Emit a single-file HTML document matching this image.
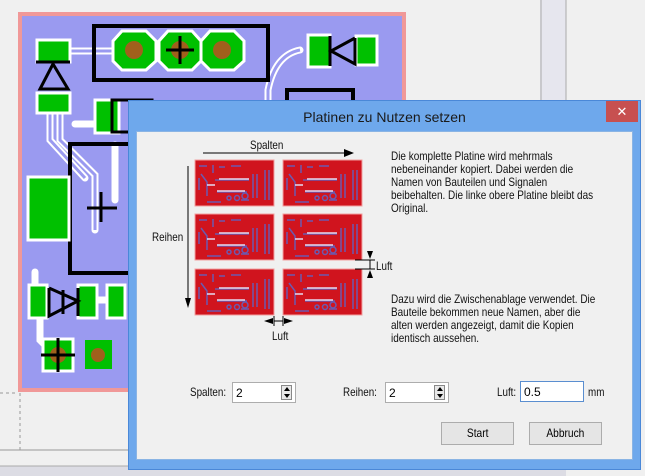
<!DOCTYPE html>
<html><head><meta charset="utf-8"><style>
html,body{margin:0;padding:0;}
body{width:645px;height:476px;overflow:hidden;background:#f0f0f0;position:relative;font-family:"Liberation Sans",sans-serif;}
.abs{position:absolute;}
.t{font-size:12px;color:#111;transform:scaleX(0.82);transform-origin:0 0;white-space:nowrap;}
.para{left:391px;font-size:12px;line-height:13px;color:#111;transform:scaleX(0.83);transform-origin:0 0;white-space:nowrap;}
.spin{background:#fff;border:1px solid #adadad;height:21px;font-size:12px;line-height:20px;padding-left:3px;box-sizing:border-box;}
.sb{position:absolute;right:3px;top:2px;width:11px;height:15px;border:1px solid #888;background:#e8e8e8;box-sizing:border-box;}
.sb:before{content:"";position:absolute;left:2px;top:1px;border-left:3px solid transparent;border-right:3px solid transparent;border-bottom:4px solid #000;}
.sb:after{content:"";position:absolute;left:2px;bottom:1px;border-left:3px solid transparent;border-right:3px solid transparent;border-top:4px solid #000;}
.btn{background:#e5e5e5;border:1px solid #acacac;font-size:12px;text-align:center;line-height:21px;box-sizing:border-box;}
.btn span{display:inline-block;transform:scaleX(0.85);}
</style></head><body>
<svg class="abs" style="left:0;top:0" width="645" height="476">
 <rect x="540" y="0" width="26" height="100" fill="#e6e6ee"/>
 <line x1="541" y1="0" x2="541" y2="100" stroke="#aaa"/>
 <line x1="566" y1="0" x2="566" y2="100" stroke="#aaa"/>
 <line x1="0" y1="393" x2="18" y2="393" stroke="#999" stroke-dasharray="3,3"/>
 <line x1="20" y1="393" x2="20" y2="450" stroke="#999" stroke-dasharray="3,3"/>
 <line x1="0" y1="450" x2="130" y2="450" stroke="#999"/>
 <rect x="0" y="466" width="566" height="10" fill="#dcdce4"/>
 <line x1="0" y1="466" x2="566" y2="466" stroke="#aaa"/>
 <rect x="18" y="12" width="388" height="380" fill="#f09898"/>
 <rect x="22" y="16" width="380" height="372" fill="#9a9af0"/>
 <g stroke="#fff" stroke-width="7" fill="none" stroke-linecap="round">
  <path d="M70 51 H112"/><path d="M300 50 Q275 55 268 90 V130"/>
  <path d="M60 110 V140 L95 175 V230"/><path d="M50 110 V140 L85 178"/>
  <path d="M75 124 H100"/><path d="M115 145 V200"/><path d="M35 272 V285"/>
  <path d="M40 318 V340 L50 350"/><path d="M97 300 H110"/>
 </g>
 <g stroke="#9a9af0" stroke-width="3" fill="none">
  <path d="M70 51 H112"/><path d="M300 50 Q275 55 268 90 V130"/>
  <path d="M60 110 V140 L95 175 V230"/><path d="M50 110 V140 L85 178"/>
 </g>
 <rect x="94" y="26" width="174" height="54" fill="none" stroke="#000" stroke-width="4"/>
 <g fill="#00c000" stroke="#fff" stroke-width="3">
  <polygon points="122,31 146,31 156,41 156,61 146,70 122,70 113,61 113,41"/>
  <polygon points="168,31 192,31 201,41 201,61 192,70 168,70 159,61 159,41"/>
  <polygon points="210,31 234,31 244,41 244,61 234,70 210,70 201,61 201,41"/>
 </g>
 <circle cx="134" cy="50" r="9" fill="#a0601c"/><circle cx="180" cy="50" r="9" fill="#a0601c"/><circle cx="222" cy="50" r="9" fill="#a0601c"/>
 <path d="M166 50 H194 M180 36 V64" stroke="#000" stroke-width="3"/>
 <rect x="37" y="40" width="33" height="22" fill="#00c000" stroke="#fff" stroke-width="3"/>
 <rect x="37" y="93" width="33" height="20" fill="#00c000" stroke="#fff" stroke-width="3"/>
 <path d="M36 62 H70 M53 64 L40 89 H68 Z" stroke="#000" stroke-width="3" fill="none"/>
 <rect x="308" y="35" width="22" height="32" fill="#00c000" stroke="#fff" stroke-width="3"/>
 <rect x="356" y="36" width="21" height="29" fill="#00c000" stroke="#fff" stroke-width="3"/>
 <path d="M330 36 V66 M355 38 V64 L331 51 L355 38" stroke="#000" stroke-width="3" fill="none"/>
 <rect x="287" y="90" width="66" height="40" fill="none" stroke="#000" stroke-width="4"/>
 <rect x="95" y="100" width="24" height="33" fill="#00c000" stroke="#fff" stroke-width="3"/>
 <rect x="112" y="100" width="40" height="32" fill="none" stroke="#000" stroke-width="3"/>
 <rect x="70" y="144" width="70" height="129" fill="none" stroke="#000" stroke-width="4"/>
 <rect x="28" y="177" width="41" height="63" fill="#00c000" stroke="#fff" stroke-width="3"/>
 <path d="M87 208 H117 M101 192 V222" stroke="#000" stroke-width="3"/>
 <rect x="29" y="285" width="18" height="33" fill="#00c000" stroke="#fff" stroke-width="3"/>
 <rect x="78" y="285" width="19" height="33" fill="#00c000" stroke="#fff" stroke-width="3"/>
 <rect x="107" y="285" width="18" height="33" fill="#00c000" stroke="#fff" stroke-width="3"/>
 <path d="M49 288 V316 L78 301 L49 288 M63 290 V314 M78 288 V316" stroke="#000" stroke-width="3" fill="none"/>
 <rect x="43" y="339" width="30" height="32" fill="#00c000" stroke="#fff" stroke-width="3"/>
 <circle cx="58" cy="355" r="8" fill="#a0601c"/>
 <path d="M41 355 H75 M58 338 V372" stroke="#000" stroke-width="3"/>
 <rect x="85" y="340" width="27" height="29" fill="#00c000"/>
 <circle cx="98" cy="355" r="7" fill="#a0601c"/>
</svg>

<div class="abs" style="left:128px;top:100px;width:513px;height:370px;background:#6ea8ec;border:1px solid #4a88d8;box-sizing:border-box;"></div>
<div class="abs" style="left:128px;top:104px;width:513px;text-align:center;font-size:14px;color:#1a1a1a;line-height:26px;">Platinen zu Nutzen setzen</div>
<div class="abs" style="left:606px;top:101px;width:32px;height:21px;background:#c75050;color:#fff;text-align:center;font-size:13px;line-height:21px;">✕</div>
<div class="abs" style="left:136px;top:131px;width:497px;height:329px;background:#f0f0f0;border:1px solid #8ab4e4;box-sizing:border-box;"></div>

<svg class="abs" style="left:0;top:0" width="645" height="476">
 <defs>
  <g id="pcb">
   <rect width="79" height="46" fill="#d0141e" stroke="#f2a0a0" stroke-width="1"/>
   <g fill="none" stroke="#6a5ab0" stroke-width="1.5">
    <path d="M4 6 h8 M18 5 v8 M24 7 h6 M36 6 h10 M6 14 l6 8 v14 M4 18 v12 M20 20 h34 M22 32 h30 M46 40 h8 M12 42 h14 M58 14 v24 M62 14 v24 M70 10 v30 M74 10 v30"/>
    <circle cx="50" cy="36" r="3"/><circle cx="42" cy="38" r="2.5"/><circle cx="34" cy="38" r="2"/>
   </g>
   <g fill="#e8e8ff" opacity="0.7"><rect x="24" y="18" width="30" height="2"/><rect x="22" y="30" width="28" height="2"/><rect x="12" y="24" width="8" height="2"/></g>
  </g>
 </defs>
 <use href="#pcb" x="195" y="160"/><use href="#pcb" x="283" y="160"/>
 <use href="#pcb" x="195" y="214"/><use href="#pcb" x="283" y="214"/>
 <use href="#pcb" x="195" y="269"/><use href="#pcb" x="283" y="269"/>
 <line x1="203" y1="153" x2="346" y2="153" stroke="#000"/><polygon points="344,149 354,153 344,157" fill="#000"/>
 <line x1="188" y1="166" x2="188" y2="300" stroke="#000"/><polygon points="185,298 188,308 191,298" fill="#000"/>
 <line x1="355" y1="260" x2="375" y2="260" stroke="#000"/><line x1="355" y1="269" x2="375" y2="269" stroke="#000"/>
 <polygon points="367,251 373,251 370,259" fill="#000"/><polygon points="367,278 373,278 370,270" fill="#000"/><line x1="370" y1="260" x2="370" y2="269" stroke="#000"/>
 <line x1="274" y1="316" x2="274" y2="326" stroke="#000"/><line x1="283" y1="316" x2="283" y2="326" stroke="#000"/>
 <polygon points="264,321 273,318 273,324" fill="#000"/><polygon points="293,321 284,318 284,324" fill="#000"/><line x1="274" y1="321" x2="283" y2="321" stroke="#000"/>
</svg>
<div class="abs t" style="left:250px;top:138px;">Spalten</div>
<div class="abs t" style="left:152px;top:230px;">Reihen</div>
<div class="abs t" style="left:376px;top:259px;">Luft</div>
<div class="abs t" style="left:272px;top:329px;">Luft</div>

<div class="abs para" style="top:150px;">Die komplette Platine wird mehrmals<br>nebeneinander kopiert. Dabei werden die<br>Namen von Bauteilen und Signalen<br>beibehalten. Die linke obere Platine bleibt das<br>Original.</div>
<div class="abs para" style="top:293px;">Dazu wird die Zwischenablage verwendet. Die<br>Bauteile bekommen neue Namen, aber die<br>alten werden angezeigt, damit die Kopien<br>identisch aussehen.</div>

<div class="abs t" style="left:190px;top:385px;">Spalten:</div>
<div class="abs spin" style="left:232px;top:382px;width:64px;">2<div class="sb"></div></div>
<div class="abs t" style="left:343px;top:385px;">Reihen:</div>
<div class="abs spin" style="left:385px;top:382px;width:64px;">2<div class="sb"></div></div>
<div class="abs t" style="left:497px;top:385px;">Luft:</div>
<div class="abs spin" style="left:520px;top:381px;width:64px;height:21px;border-color:#5a8ed0;">0.5</div>
<div class="abs t" style="left:588px;top:385px;">mm</div>
<div class="abs btn" style="left:441px;top:422px;width:73px;height:23px;"><span>Start</span></div>
<div class="abs btn" style="left:529px;top:422px;width:73px;height:23px;"><span>Abbruch</span></div>
</body></html>
